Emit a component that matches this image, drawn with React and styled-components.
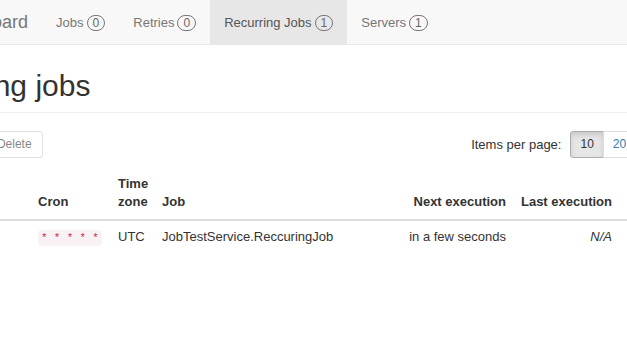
import React from 'react';
import styled, { createGlobalStyle } from 'styled-components';

const GlobalStyle = createGlobalStyle`
    html, body {
        margin: 0;
        padding: 0;
        background: #fff;
        overflow: hidden;
    }
    body {
        font-family: "Liberation Sans", Arial, sans-serif;
        font-size: 13px;
        color: #333;
    }
    * {
        box-sizing: border-box;
    }
`;

const navItems = [
    { label: 'Jobs', count: 0 },
    { label: 'Retries', count: 0 },
    { label: 'Recurring Jobs', count: 1, active: true },
    { label: 'Servers', count: 1 },
];

const pageSizes = [10, 20, 50, 100, 500, 1000, 5000];

const columns = [
    { key: 'check', title: '', width: 30 },
    { key: 'id', title: 'Id', width: 103 },
    { key: 'cron', title: 'Cron', width: 80 },
    { key: 'tz', title: 'Time zone', width: 44 },
    { key: 'job', title: 'Job', width: 252 },
    { key: 'next', title: 'Next execution', width: 108, right: true },
    { key: 'last', title: 'Last execution', width: 106, right: true },
    { key: 'created', title: 'Created', width: 218, right: true },
];

const App = () => {
    return (
        <>
            <GlobalStyle />
            <Navbar>
                <NavInner>
                    <Brand>Hangfire Dashboard</Brand>
                    <NavList>
                        {navItems.map((item) => (
                            <NavItem key={item.label} $active={item.active}>
                                {item.label}
                                <Badge>{item.count}</Badge>
                            </NavItem>
                        ))}
                    </NavList>
                </NavInner>
            </Navbar>

            <Page>
                <Title>Recurring jobs</Title>

                <Toolbar>
                    <Actions>
                        <Button disabled>Trigger now</Button>
                        <Button disabled>Delete</Button>
                    </Actions>

                    <PerPage>
                        <PerPageLabel>Items per page:</PerPageLabel>
                        <ButtonGroup>
                            {pageSizes.map((size) => (
                                <PageButton key={size} $active={size === 10}>
                                    {size}
                                </PageButton>
                            ))}
                        </ButtonGroup>
                    </PerPage>
                </Toolbar>

                <Table>
                    <colgroup>
                        {columns.map((col) => (
                            <col key={col.key} style={{ width: col.width }} />
                        ))}
                    </colgroup>
                    <thead>
                        <tr>
                            {columns.map((col) => (
                                <Th key={col.key} $right={col.right}>
                                    {col.key === 'check' ? <input type="checkbox" /> : col.title}
                                </Th>
                            ))}
                        </tr>
                    </thead>
                    <tbody>
                        <tr>
                            <Td><input type="checkbox" /></Td>
                            <Td>job</Td>
                            <Td><Cron>* * * * *</Cron></Td>
                            <Td>UTC</Td>
                            <Td>JobTestService.ReccuringJob</Td>
                            <Td $right>in a few seconds</Td>
                            <Td $right><em>N/A</em></Td>
                            <Td $right>a minute ago</Td>
                        </tr>
                    </tbody>
                </Table>
            </Page>
        </>
    );
};

export default App;

const Navbar = styled.nav`
    height: 45px;
    background: #f8f8f8;
    border-bottom: 1px solid #e7e7e7;
    overflow: hidden;
`;

const NavInner = styled.div`
    display: flex;
    align-items: stretch;
    height: 44px;
    margin-left: -148px;
`;

const Brand = styled.span`
    display: flex;
    align-items: center;
    padding: 1px 14px 0 15px;
    font-size: 18px;
    color: #777;
    white-space: nowrap;
`;

const NavList = styled.div`
    display: flex;
    align-items: stretch;
`;

const NavItem = styled.span`
    display: flex;
    align-items: center;
    gap: 3px;
    padding: 1px 14px 0;
    color: ${({ $active }) => ($active ? '#555' : '#777')};
    background: ${({ $active }) => ($active ? '#e7e7e7' : 'transparent')};
    white-space: nowrap;
`;

const Badge = styled.span`
    display: inline-block;
    min-width: 18px;
    padding: 0 5px;
    border: 1px solid #777;
    border-radius: 9px;
    font-size: 12px;
    line-height: 14px;
    text-align: center;
    color: #666;
`;

const Page = styled.main`
    width: 941px;
    margin-left: -103px;
`;

const Title = styled.h1`
    margin: 24px 0 18px;
    padding-bottom: 9px;
    border-bottom: 1px solid #eee;
    font-size: 30px;
    font-weight: 500;
    line-height: 34px;
    color: #333;
`;

const Toolbar = styled.div`
    display: flex;
    justify-content: space-between;
    align-items: center;
    margin-bottom: 9px;
`;

const Actions = styled.div`
    display: flex;
    gap: 4px;
`;

const Button = styled.button`
    padding: 5px 10px;
    font-family: inherit;
    font-size: 12px;
    line-height: 15px;
    color: #333;
    background: #fff;
    border: 1px solid #ccc;
    border-radius: 3px;
    opacity: 0.6;
`;

const PerPage = styled.div`
    display: flex;
    align-items: center;
`;

const PerPageLabel = styled.span`
    margin-right: 9px;
    color: #333;
`;

const ButtonGroup = styled.div`
    display: flex;
`;

const PageButton = styled.span`
    padding: 5px 9px;
    font-size: 12px;
    line-height: 15px;
    color: ${({ $active }) => ($active ? '#333' : '#337ab7')};
    background: ${({ $active }) => ($active ? '#e6e6e6' : '#fff')};
    border: 1px solid ${({ $active }) => ($active ? '#adadad' : '#ddd')};
    box-shadow: ${({ $active }) => ($active ? 'inset 0 3px 5px rgba(0,0,0,.125)' : 'none')};
    margin-left: -1px;

    &:first-child {
        margin-left: 0;
        border-radius: 3px 0 0 3px;
    }
    &:last-child {
        border-radius: 0 3px 3px 0;
    }
`;

const Table = styled.table`
    width: 100%;
    table-layout: fixed;
    border-collapse: collapse;
`;

const Th = styled.th`
    padding: ${({ $right }) => ($right ? '8px 8px 8px 0' : '8px')};
    vertical-align: bottom;
    text-align: ${({ $right }) => ($right ? 'right' : 'left')};
    white-space: ${({ $right }) => ($right ? 'nowrap' : 'normal')};
    font-weight: bold;
    line-height: 18px;
    color: #333;
    border-bottom: 2px solid #ddd;

    & > input {
        margin: 0;
    }
`;

const Td = styled.td`
    padding: ${({ $right }) => ($right ? '7px 8px 8px 0' : '7px 8px 8px')};
    line-height: 18px;
    text-align: ${({ $right }) => ($right ? 'right' : 'left')};
    white-space: nowrap;
    overflow: hidden;

    & > input {
        margin: 0;
    }
`;

const Cron = styled.code`
    display: inline-block;
    padding: 2px 3px;
    font-family: "Liberation Mono", monospace;
    font-size: 10.7px;
    line-height: 12px;
    color: #c7254e;
    background: #f9f2f4;
    border-radius: 4px;
`;
